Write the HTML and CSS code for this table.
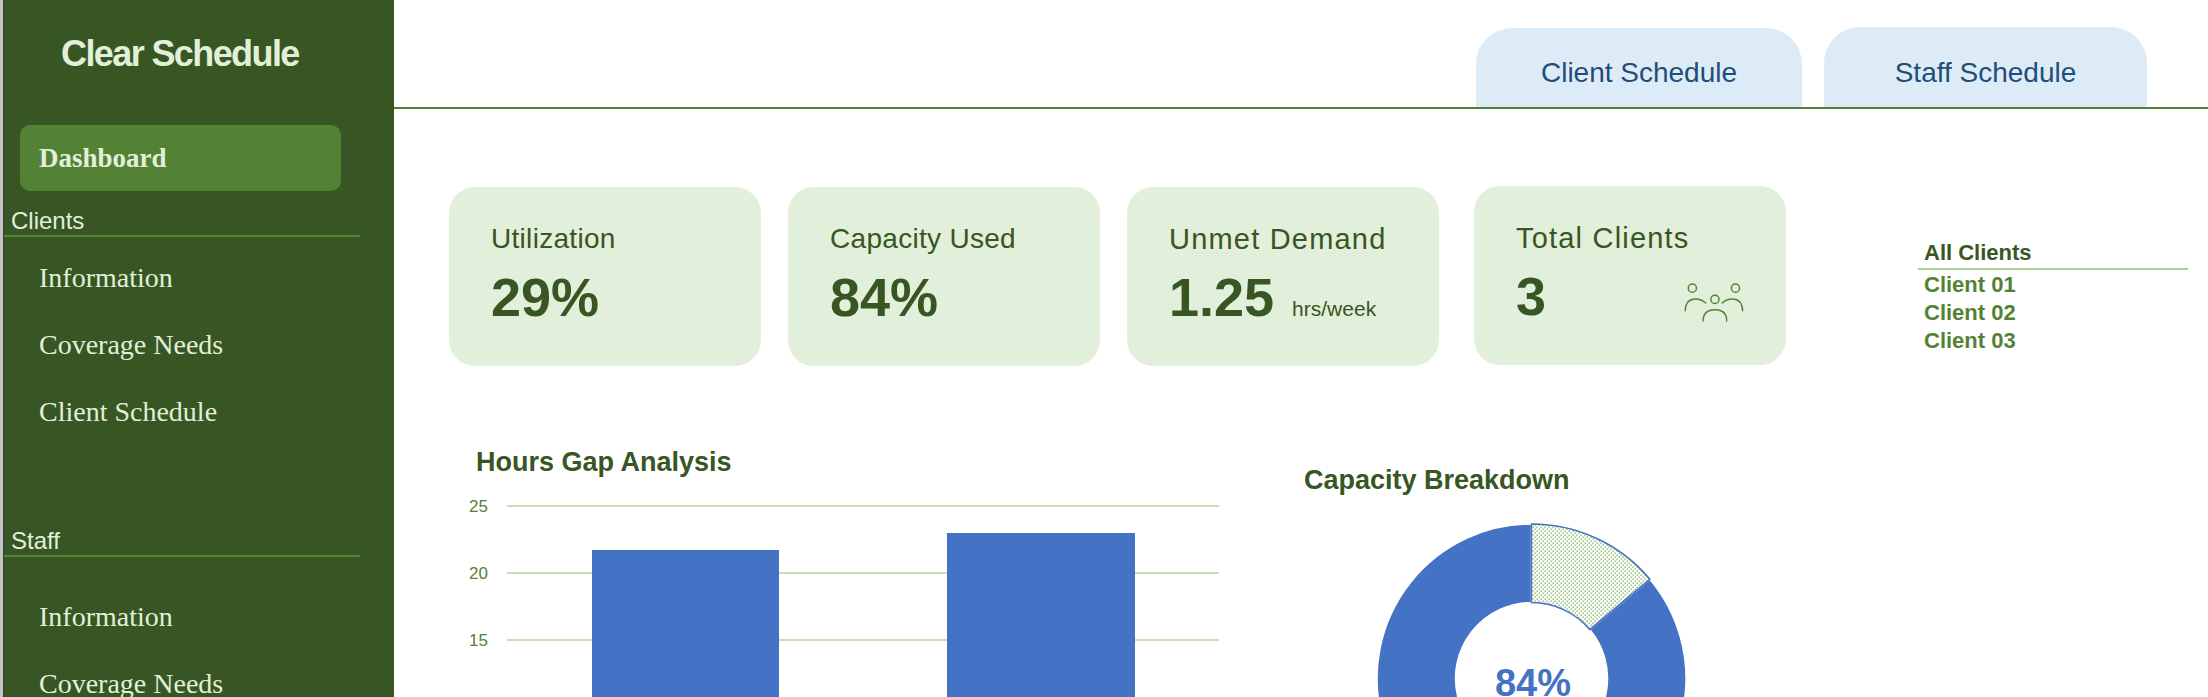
FILE: index.html
```html
<!DOCTYPE html>
<html lang="en">
<head>
<meta charset="utf-8">
<title>Clear Schedule – Dashboard</title>
<link rel="stylesheet" href="styles.css">
</head>
<body>
<aside class="sidebar">
  <div class="brand">Clear Schedule</div>
  <a class="nav-active">Dashboard</a>
  <div class="nav-group">Clients</div>
  <ul class="nav-list">
    <li>Information</li>
    <li>Coverage Needs</li>
    <li>Client Schedule</li>
  </ul>
  <div class="nav-group nav-group--staff">Staff</div>
  <ul class="nav-list nav-list--staff">
    <li>Information</li>
    <li>Coverage Needs</li>
  </ul>
</aside>
<main class="main">
  <header class="topbar">
    <div class="tab">Client Schedule</div>
    <div class="tab tab--staff">Staff Schedule</div>
  </header>
  <section class="content">
    <div class="kpis">
      <div class="card">
        <div class="card-title">Utilization</div>
        <div class="card-value">29%</div>
      </div>
      <div class="card">
        <div class="card-title">Capacity Used</div>
        <div class="card-value">84%</div>
      </div>
      <div class="card">
        <div class="card-title card-title--wide">Unmet Demand</div>
        <div class="card-value">1.25<span class="unit">hrs/week</span></div>
      </div>
      <div class="card card--last">
        <div class="card-title card-title--wide">Total Clients</div>
        <div class="card-row">
          <div class="card-value">3</div>
          <svg class="people" viewBox="0 0 64 38" width="66" height="39" aria-hidden="true">
            <circle cx="8" cy="5" r="4"/>
            <circle cx="50" cy="5" r="4"/>
            <circle cx="30" cy="16" r="4"/>
            <path d="M1 27 Q1.5 15.5 11 15.5 Q17 15.5 21 19.5"/>
            <path d="M57 27 Q56.5 15.5 47 15.5 Q41 15.5 37 19.5"/>
            <path d="M18.5 37 Q18.5 26 30 26 Q41.5 26 41.5 37"/>
          </svg>
        </div>
      </div>
      <div class="client-list">
        <div class="client-list-head">All Clients</div>
        <div class="client-item">Client 01</div>
        <div class="client-item">Client 02</div>
        <div class="client-item">Client 03</div>
      </div>
    </div>
    <div class="charts">
      <div class="chart chart--bars">
        <h2 class="chart-title chart-title--bars">Hours Gap Analysis</h2>
        <svg class="bars" width="760" height="207" viewBox="0 0 760 207">
          <g class="grid">
            <line x1="41" y1="16" x2="753" y2="16"/>
            <line x1="41" y1="83" x2="753" y2="83"/>
            <line x1="41" y1="150" x2="753" y2="150"/>
          </g>
          <g class="axis">
            <text x="22" y="22">25</text>
            <text x="22" y="89">20</text>
            <text x="22" y="156">15</text>
          </g>
          <rect x="126" y="60" width="187" height="200" fill="#4472c4"/>
          <rect x="481" y="43" width="188" height="200" fill="#4472c4"/>
        </svg>
      </div>
      <div class="chart chart--donut">
        <h2 class="chart-title">Capacity Breakdown</h2>
        <svg class="donut" width="460" height="190" viewBox="0 0 460 190">
          <defs>
            <pattern id="dots" width="4" height="4" patternUnits="userSpaceOnUse">
              <rect width="4" height="4" fill="#ffffff"/>
              <rect x="0.5" y="0.5" width="1.3" height="1.3" fill="#70ad47"/>
              <rect x="2.5" y="2.5" width="1.3" height="1.3" fill="#70ad47"/>
            </pattern>
          </defs>
          <path d="M345.85 69.16 A154.5 154.5 0 1 1 227.5 14 L227.5 92.5 A76 76 0 1 0 285.7 119.6 Z" fill="#4472c4" stroke="#ffffff" stroke-width="1.5"/>
          <path d="M227.5 14 A154.5 154.5 0 0 1 345.85 69.16 L285.7 119.6 A76 76 0 0 0 227.5 92.5 Z" fill="url(#dots)" stroke="#4472c4" stroke-width="1.5"/>
          <text class="donut-label" x="229" y="186">84%</text>
        </svg>
      </div>
    </div>
  </section>
</main>
</body>
</html>
```

FILE: styles.css
```css
html, body {
  margin: 0;
  height: 100%;
  overflow: hidden;
  background: #ffffff;
}

body {
  display: flex;
  font-family: "Liberation Sans", Arial, sans-serif;
}

/* Sidebar */
.sidebar {
  flex: 0 0 391px;
  height: 100%;
  background: #375623;
  border-left: 3px solid #c4c4c4;
  box-shadow: inset 1px 0 0 #3a3a3a;
  color: #e2efda;
  padding-top: 33px;
  box-sizing: content-box;
}

.brand {
  margin-left: 58px;
  font-size: 36px;
  line-height: 41px;
  font-weight: 700;
  letter-spacing: -1.6px;
  color: #e2efda;
}

.nav-active {
  display: flex;
  align-items: center;
  margin: 51px 0 0 17px;
  width: 321px;
  height: 66px;
  box-sizing: border-box;
  padding-left: 19px;
  background: #548235;
  border-radius: 10px;
  font-family: "Liberation Serif", "Times New Roman", serif;
  font-weight: 700;
  font-size: 27px;
  color: #e2efda;
}

.nav-group {
  margin: 16px 0 0 1px;
  width: 356px;
  padding-left: 7px;
  box-sizing: border-box;
  font-size: 24px;
  line-height: 28px;
  border-bottom: 2px solid #548235;
  color: #e2efda;
}

.nav-group--staff {
  margin-top: 82px;
}

.nav-list {
  list-style: none;
  margin: 7px 0 0;
  padding: 0 0 0 36px;
}

.nav-list--staff {
  margin-top: 26px;
}

.nav-list li {
  height: 67px;
  line-height: 67px;
  font-family: "Liberation Serif", "Times New Roman", serif;
  font-size: 28px;
  color: #e2efda;
}

/* Main */
.main {
  flex: 1 1 auto;
  min-width: 0;
}

.topbar {
  height: 107px;
  border-bottom: 2px solid #548235;
  display: flex;
  justify-content: flex-end;
  align-items: flex-end;
  gap: 22px;
  padding-right: 61px;
}

.tab {
  width: 326px;
  height: 79px;
  box-sizing: border-box;
  padding-top: 29px;
  background: #ddebf7;
  border-radius: 36px 36px 0 0;
  text-align: center;
  font-size: 28px;
  line-height: 32px;
  color: #1f4e79;
}

.tab--staff {
  width: 323px;
  height: 80px;
  padding-top: 30px;
}

.content {
  padding: 78px 0 0 55px;
}

.kpis {
  display: flex;
  align-items: flex-start;
  gap: 27px;
}

.card {
  width: 312px;
  height: 179px;
  box-sizing: border-box;
  padding: 36px 36px 0 42px;
  background: #e2efda;
  border-radius: 26px;
  color: #375623;
}

.card--last {
  margin-left: 8px;
  margin-top: -1px;
}

.card-title {
  font-size: 28px;
  line-height: 32px;
  letter-spacing: 0.3px;
  color: #375623;
}

.card-title--wide {
  font-size: 29px;
  letter-spacing: 1.2px;
}

.card-value {
  margin-top: 14px;
  font-size: 54px;
  line-height: 57px;
  font-weight: 700;
  color: #375623;
}

.unit {
  margin-left: 18px;
  font-size: 21px;
  font-weight: 400;
}

.card-row {
  display: flex;
  justify-content: space-between;
  align-items: center;
}

.people {
  margin-top: 26px;
  fill: none;
  stroke: #548235;
  stroke-width: 1.4;
  stroke-linecap: round;
}

.client-list {
  margin: 53px 0 0 105px;
  width: 270px;
}

.client-list-head {
  padding-left: 6px;
  font-size: 22px;
  line-height: 26px;
  font-weight: 700;
  color: #375623;
  border-bottom: 2px solid #a9d08e;
  padding-bottom: 2px;
  margin-bottom: 1px;
}

.client-item {
  padding-left: 6px;
  font-size: 22px;
  line-height: 28px;
  font-weight: 700;
  color: #548235;
}

/* Charts */
.charts {
  display: flex;
  align-items: flex-start;
  margin-top: 81px;
  padding-left: 17px;
  gap: 78px;
}

.chart-title {
  margin: 0;
  font-size: 27px;
  line-height: 31px;
  font-weight: 700;
  color: #375623;
}

.chart-title--bars {
  line-height: 30px;
  padding-left: 10px;
}

.chart--bars .bars {
  display: block;
  margin-top: 13px;
}

.chart--donut {
  margin-top: 18px;
}

.chart--donut .donut {
  display: block;
  margin-top: 14px;
}

.grid line {
  stroke: #c6e0b4;
  stroke-width: 2;
}

.axis text {
  font-family: "Liberation Sans", Arial, sans-serif;
  font-size: 17px;
  fill: #548235;
  text-anchor: end;
}

.donut-label {
  font-family: "Liberation Sans", Arial, sans-serif;
  font-size: 38px;
  font-weight: 700;
  fill: #4472c4;
  text-anchor: middle;
}
```
